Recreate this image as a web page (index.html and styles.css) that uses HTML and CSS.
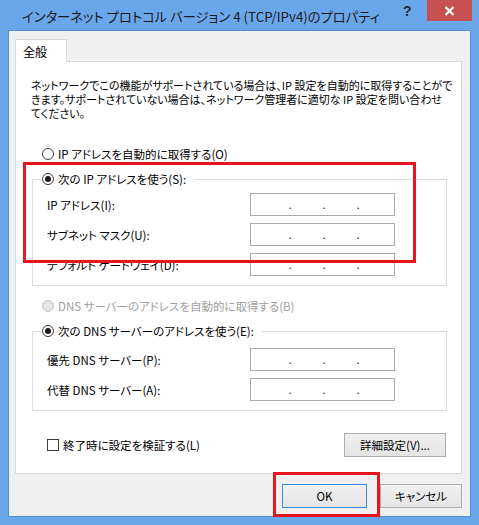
FILE: index.html
```html
<!DOCTYPE html>
<html lang="ja">
<head>
  <meta charset="UTF-8" />
  <title>インターネット プロトコル バージョン 4 (TCP/IPv4)のプロパティ</title>
  <link rel="stylesheet" href="styles.css">
</head>
<body>
  <div class="window">
    <div class="titlebar">
      <span class="title">インターネット プロトコル バージョン 4 (TCP/IPv4)のプロパティ</span>
      <span class="help">?</span>
      <span class="close">
        <svg width="11" height="10" viewBox="0 0 11 10">
          <path d="M1.5 1 L9.5 9 M9.5 1 L1.5 9" stroke="#fff" stroke-width="2.2" fill="none"/>
        </svg>
      </span>
    </div>

    <div class="client">
      <div class="tabs">
        <div class="tab">全般</div>
      </div>

      <div class="panel">
        <p class="desc">ネットワークでこの機能がサポートされている場合は、IP 設定を自動的に取得することがで<br>きます。サポートされていない場合は、ネットワーク管理者に適切な IP 設定を問い合わせ<br>てください。</p>

        <div class="option">
          <span class="radio"></span>IP アドレスを自動的に取得する(O)
        </div>

        <fieldset class="group group-ip">
          <legend class="option legend"><span class="radio checked"></span>次の IP アドレスを使う(S):</legend>
          <div class="field">
            <span class="label">IP アドレス(I):</span>
            <div class="ipbox"><span>.</span><span>.</span><span>.</span></div>
          </div>
          <div class="field">
            <span class="label">サブネット マスク(U):</span>
            <div class="ipbox"><span>.</span><span>.</span><span>.</span></div>
          </div>
          <div class="field">
            <span class="label">デフォルト ゲートウェイ(D):</span>
            <div class="ipbox"><span>.</span><span>.</span><span>.</span></div>
          </div>
        </fieldset>

        <div class="option disabled">
          <span class="radio"></span>DNS サーバーのアドレスを自動的に取得する(B)
        </div>

        <fieldset class="group group-dns">
          <legend class="option legend"><span class="radio checked"></span>次の DNS サーバーのアドレスを使う(E):</legend>
          <div class="field">
            <span class="label">優先 DNS サーバー(P):</span>
            <div class="ipbox"><span>.</span><span>.</span><span>.</span></div>
          </div>
          <div class="field">
            <span class="label">代替 DNS サーバー(A):</span>
            <div class="ipbox"><span>.</span><span>.</span><span>.</span></div>
          </div>
        </fieldset>

        <div class="bottom-row">
          <div class="check-row"><span class="checkbox"></span>終了時に設定を検証する(L)</div>
          <button class="btn btn-advanced">詳細設定(V)...</button>
        </div>
      </div>

      <div class="footer">
        <button class="btn btn-ok">OK</button>
        <button class="btn btn-cancel">キャンセル</button>
      </div>
    </div>

    <!-- highlight boxes drawn on top of the screenshot -->
    <div class="mark mark-ip"></div>
    <div class="mark mark-ok"></div>
  </div>
</body>
</html>
```

FILE: styles.css
```css
* {
  margin: 0;
  padding: 0;
  box-sizing: border-box;
}

body {
  font-family: "Noto Sans CJK JP", "Noto Sans", sans-serif;
  font-size: 11.5px;
  font-feature-settings: "palt";
  color: #000;
  background: #fff;
}

.window {
  position: relative;
  width: 479px;
  height: 525px;
  background: #6aa7ea;
  padding: 0 8px 8px;
  display: flex;
  flex-direction: column;
}

.titlebar {
  height: 30px;
  display: flex;
  align-items: flex-start;
}

.title {
  margin: 7px 0 0 14px;
  font-size: 13.3px;
  color: #1a1a1a;
  white-space: nowrap;
}

.help {
  margin: 3px 0 0 auto;
  width: 24px;
  font-family: "Liberation Sans", sans-serif;
  font-size: 14px;
  font-weight: bold;
  color: #1d2b3a;
}

.close {
  width: 45px;
  height: 21px;
  margin-right: -1px;
  background: #c75050;
  display: flex;
  align-items: center;
  justify-content: center;
}

.client {
  flex: 1;
  background: #f0f0f0;
  border: 1px solid #4f8fd6;
  padding: 8px 0 0 6px;
}

.tabs {
  height: 22px;
  display: flex;
}

.tab {
  width: 52px;
  height: 23px;
  background: #fff;
  border: 1px solid #d9d9d9;
  border-bottom: none;
  padding: 3px 0 0 7px;
  font-size: 12px;
  position: relative;
  z-index: 1;
}

.panel {
  width: 447px;
  height: 413px;
  background: #fff;
  border: 1px solid #d9d9d9;
  padding: 16px 15px 0;
}

.desc {
  font-size: 11px;
  line-height: 14px;
  white-space: nowrap;
}

.option {
  display: flex;
  align-items: center;
  height: 16px;
  padding-left: 11px;
  margin-top: 26px;
  white-space: nowrap;
}

.option.disabled {
  color: #a0a0a0;
  margin-top: 12px;
}

.radio {
  width: 12px;
  height: 12px;
  border: 1px solid #3c3c3c;
  border-radius: 50%;
  background: #fff;
  margin-right: 4px;
  display: flex;
  align-items: center;
  justify-content: center;
  flex-shrink: 0;
}

.radio.checked::after {
  content: "";
  width: 6px;
  height: 6px;
  border-radius: 50%;
  background: #1a1a1a;
}

.disabled .radio {
  border-color: #c4c4c4;
  background: #e6e6e6;
}

.group {
  border: 1px solid #dcdcdc;
  margin: 9px -1px 0 1px;
  min-width: 0;
}

.group-ip {
  padding: 6px 0 9px;
}

.group-dns {
  padding: 9px 0 9px;
}

.legend {
  margin: 0 0 0 9px;
  padding: 0 8px 0 0;
}

.field {
  display: flex;
  align-items: center;
  height: 23px;
  padding-left: 14px;
}

.field + .field {
  margin-top: 7px;
}

.label {
  width: 203px;
  white-space: nowrap;
}

.ipbox {
  width: 145px;
  height: 23px;
  border: 1px solid #ababab;
  background: #fff;
  display: flex;
  align-items: center;
  padding: 0 0 2px 22px;
  color: #333;
}

.ipbox span {
  width: 34px;
  text-align: center;
}

.bottom-row {
  display: flex;
  justify-content: space-between;
  align-items: center;
  margin-top: 22px;
}

.check-row {
  display: flex;
  align-items: center;
  padding-left: 16px;
}

.checkbox {
  width: 12px;
  height: 12px;
  border: 1px solid #3c3c3c;
  background: #fff;
  margin-right: 4px;
}

.btn {
  height: 24px;
  font-family: inherit;
  font-size: 11.5px;
  font-feature-settings: "palt";
  color: #000;
  background: linear-gradient(#f0f0f0, #e5e5e5);
  border: 1px solid #acacac;
}

.btn-advanced {
  width: 102px;
}

.footer {
  display: flex;
  justify-content: flex-end;
  gap: 13px;
  padding: 10px 8px 0 0;
}

.btn-ok {
  width: 85px;
  border-color: #3c8ad8;
}

.btn-cancel {
  width: 82px;
}

.mark {
  position: absolute;
  border: 3px solid #e8141e;
}

.mark-ip {
  left: 23px;
  top: 162px;
  width: 393px;
  height: 101px;
}

.mark-ok {
  left: 273px;
  top: 472px;
  width: 107px;
  height: 45px;
}
```
